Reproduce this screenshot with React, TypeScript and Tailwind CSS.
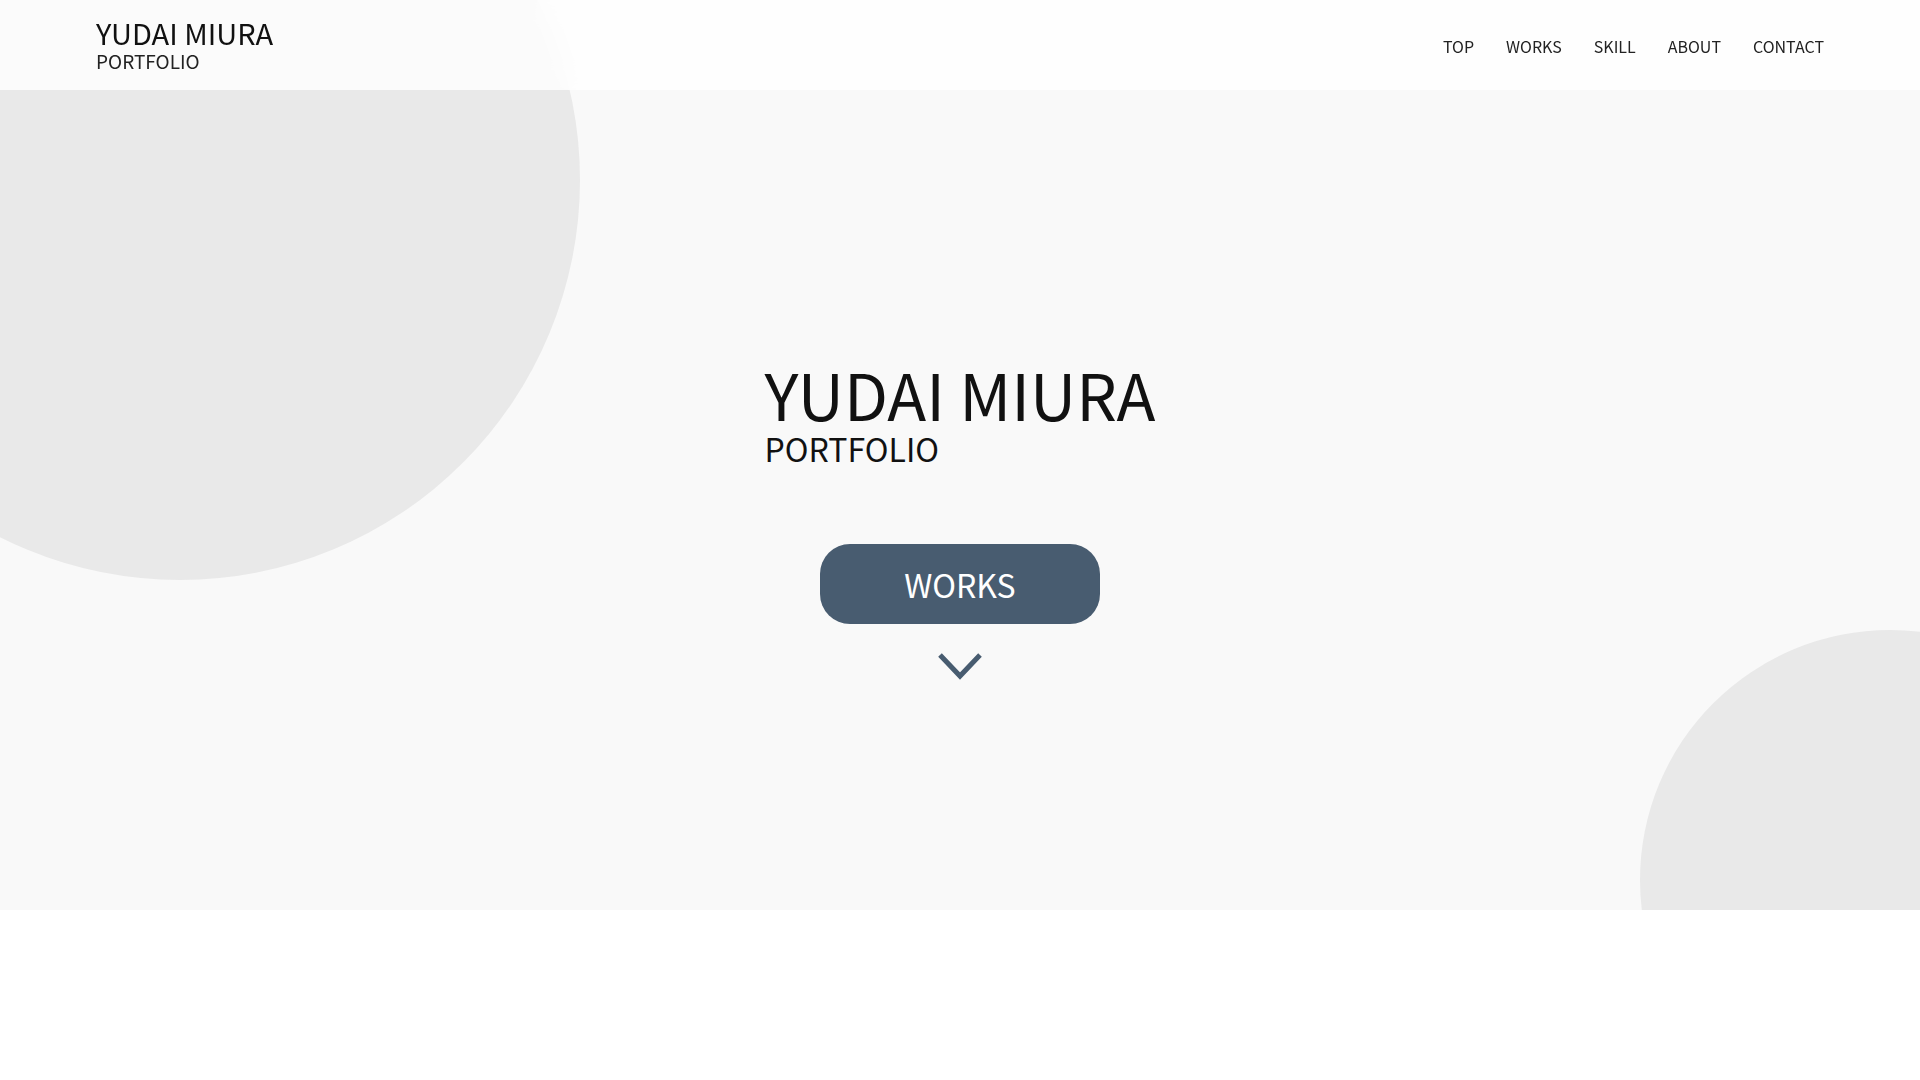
import React from "react";

const font = { fontFamily: '"Noto Sans CJK JP", "Noto Sans", sans-serif' };

export default function App() {
  return (
    <div className="relative min-h-[1080px] w-full bg-white text-[#111]" style={font}>
      <header className="absolute left-0 top-0 z-20 flex h-[90px] w-full items-center justify-between bg-white/80 px-[96px] backdrop-blur-md">
        <div className="-mt-[3px] flex flex-col">
          <span className="text-[29px] leading-none text-[#111]">YUDAI MIURA</span>
          <span className="mt-[4px] text-[19px] leading-none text-[#222]">PORTFOLIO</span>
        </div>
        <nav className="mt-[1px] flex items-center gap-[32px] text-[16px] leading-none text-[#222]">
          <a href="#">TOP</a>
          <a href="#">WORKS</a>
          <a href="#">SKILL</a>
          <a href="#">ABOUT</a>
          <a href="#">CONTACT</a>
        </nav>
      </header>

      <section className="relative h-[910px] w-full overflow-hidden bg-[#f9f9f9]">
        <div className="absolute left-[-220px] top-[-220px] h-[800px] w-[800px] rounded-full bg-[#e9e9e9]" />
        <div className="absolute left-[1640px] top-[630px] h-[500px] w-[500px] rounded-full bg-[#e9e9e9]" />

        <div className="relative z-10 flex flex-col items-center pt-[361px]">
          <div className="flex flex-col items-start">
            <h1 className="text-[64px] font-normal leading-none text-[#111]">YUDAI MIURA</h1>
            <p className="mt-[7px] text-[32px] leading-none text-[#111]">PORTFOLIO</p>
          </div>
          <a
            href="#"
            className="mt-[80px] flex h-[80px] w-[280px] items-center justify-center rounded-[30px] bg-[#485c70] text-[32px] leading-none text-white"
          >
            WORKS
          </a>
          <svg className="mt-[27px]" width="46" height="30" viewBox="0 0 46 30" fill="none">
            <polyline points="3,4 23,25 43,4" stroke="#485c70" strokeWidth="5" fill="none" />
          </svg>
        </div>
      </section>
    </div>
  );
}
